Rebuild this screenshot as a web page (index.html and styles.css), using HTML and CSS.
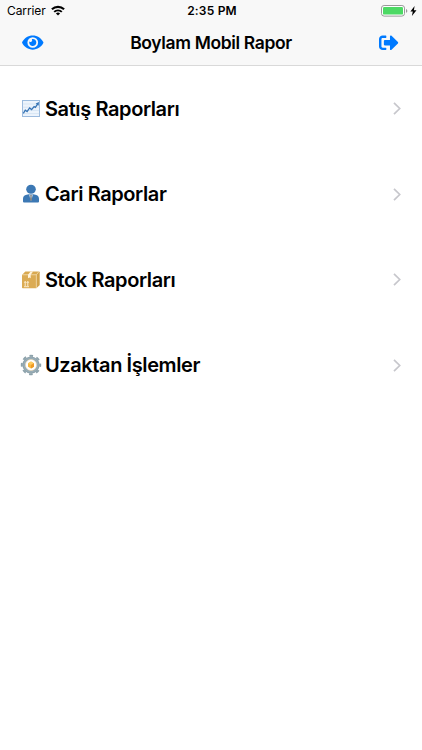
FILE: index.html
```
<!DOCTYPE html>
<html lang="tr">
<head>
    <meta charset="UTF-8">
    <meta name="viewport" content="width=device-width, initial-scale=1.0">
    <title>Boylam Mobil Rapor</title>
    <link rel="stylesheet" href="styles.css">
</head>
<body>

    <header class="header">
        <!-- Durum çubuğu -->
        <div class="status-bar">
            <div class="carrier">
                <span>Carrier</span>
                <svg class="wifi" viewBox="0 0 14 11" fill="none" stroke="#000">
                    <path d="M0.9 4.3a8.8 8.8 0 0 1 12.2 0" stroke-width="2.1"/>
                    <path d="M3.2 6.9a5.5 5.5 0 0 1 7.6 0" stroke-width="2"/>
                    <path d="M7 10.6L4.9 8.6a3 3 0 0 1 4.2 0z" fill="#000" stroke="none"/>
                </svg>
            </div>
            <span class="time">2:35 PM</span>
            <div class="power">
                <svg class="battery" viewBox="0 0 27 12">
                    <rect x="0.5" y="0.5" width="23" height="10.6" rx="2.6" fill="#fff" stroke="#999"/>
                    <rect x="2" y="2" width="20" height="7.6" rx="1.2" fill="#4cd964"/>
                    <path d="M25 4v3.8c.8-.3 1.3-1 1.3-1.9S25.8 4.3 25 4z" fill="#999"/>
                </svg>
                <svg class="bolt" viewBox="0 0 7 10"><path d="M4.6 0L.4 5.600h2.400L1.900 10 6.500 4.200H3.900z"/></svg>
            </div>
        </div>

        <!-- Üst menü -->
        <nav class="nav-bar">
            <button class="nav-button" aria-label="Göster">
                <svg class="eye" viewBox="0 0 576 512"><path d="M572.52 241.4C518.29 135.59 410.93 64 288 64S57.68 135.64 3.48 241.41a32.35 32.35 0 0 0 0 29.19C57.71 376.41 165.07 448 288 448s230.32-71.64 284.52-177.41a32.35 32.35 0 0 0 0-29.19zM288 400a144 144 0 1 1 144-144 143.93 143.93 0 0 1-144 144zm0-240a95.31 95.31 0 0 0-25.31 3.79 47.85 47.85 0 0 1-66.9 66.9A95.78 95.78 0 1 0 288 160z"/></svg>
            </button>
            <h1>Boylam Mobil Rapor</h1>
            <button class="nav-button" aria-label="Çıkış">
                <svg class="exit" viewBox="0 0 512 512"><path d="M497 273L329 441c-15 15-41 4.500-41-17v-96H152c-13.300 0-24-10.700-24-24v-96c0-13.300 10.700-24 24-24h136V88c0-21.400 25.900-32 41-17l168 168c9.300 9.400 9.300 24.600 0 34zM192 436v-40c0-6.600-5.400-12-12-12H96c-17.700 0-32-14.300-32-32V160c0-17.700 14.300-32 32-32h84c6.600 0 12-5.400 12-12V76c0-6.600-5.400-12-12-12H96c-53 0-96 43-96 96v192c0 53 43 96 96 96h84c6.600 0 12-5.400 12-12z"/></svg>
            </button>
        </nav>
    </header>

    <!-- Rapor listesi -->
    <main class="menu">
        <div class="menu-item">
            <svg class="icon" viewBox="0 0 20 20">
                <rect x="1.400" y="1.600" width="17.200" height="15.800" fill="#edf4fc" stroke="#86acd6" stroke-width="0.800"/>
                <path d="M1.800 5h16.400M1.800 8.200h16.400M1.800 11.400h16.400M1.800 14.600h16.400" stroke="#cfdff0" stroke-width="0.700"/>
                <path d="M2.300 14.400l2-3.200 1.800 1.300 2.500-3.600 2 1.700 2.500-3 1.200.7 2.500-3.500" fill="none" stroke="#3674b5" stroke-width="1.300"/>
                <path d="M18 3l-.4 3.800-2.900-2.200z" fill="#3674b5"/>
            </svg>
            <span class="label">Satış Raporları</span>
            <svg class="arrow" viewBox="0 0 8 13"><path d="M1 .8l5.700 5.700L1 12.200"/></svg>
        </div>
        <div class="menu-item">
            <svg class="icon" viewBox="0 0 20 20">
                <path d="M2 17.500v-2.800c0-2.200 1.400-3.500 3.500-3.900l2.300-.5h4.400l2.300.5c2.100.4 3.500 1.700 3.500 3.900v2.800q0 1-1 1H3q-1 0-1-1z" fill="#3c78b4"/>
                <ellipse cx="10" cy="5.200" rx="4.800" ry="4.500" fill="#3c78b4"/>
                <path d="M7.900 10.600L10 17.300l2.100-6.700z" fill="#c4d2df"/>
                <path d="M9.200 11h1.600l-.3 1.500.6 3-1.100 1.700-1.100-1.700.6-3z" fill="#858585"/>
            </svg>
            <span class="label">Cari Raporlar</span>
            <svg class="arrow" viewBox="0 0 8 13"><path d="M1 .8l5.700 5.700L1 12.200"/></svg>
        </div>
        <div class="menu-item">
            <svg class="icon" viewBox="0 0 20 20">
                <path d="M1.200 4.800L4.300 1.500h13.500L15.300 4.800z" fill="#d9a950"/>
                <path d="M15.300 4.800l2.500-3.300q.9 0 .9.800v12.400q0 .5-.4.900l-3 2.700z" fill="#d2a24a"/>
                <path d="M1 4.800h14.300v13.500H1.800q-.8 0-.8-.8z" fill="#dbab54"/>
                <path d="M1.200 4.800h14.100l2.600-3M15.300 4.800v13.300" fill="none" stroke="#f3dba9" stroke-width="0.700"/>
                <path d="M7 4.800l2.600-3.200h2.500L9.700 4.800v3.500l-1.300-.8-1.400.8z" fill="#fff4df"/>
                <path d="M4.200 16v-4.500M6.800 16v-4.500M3 16.700h5M3.300 12.700l.9-1.200.9 1.200M5.900 12.700l.9-1.200.9 1.200" fill="none" stroke="#fff4db" stroke-width="0.900"/>
            </svg>
            <span class="label">Stok Raporları</span>
            <svg class="arrow" viewBox="0 0 8 13"><path d="M1 .8l5.700 5.700L1 12.200"/></svg>
        </div>
        <div class="menu-item">
            <svg class="icon" viewBox="0 0 20 20">
                <circle cx="10" cy="10" r="9.200" fill="none" stroke="#8da2ab" stroke-width="2" stroke-dasharray="3.613 3.613" stroke-dashoffset="1.806"/>
                <circle cx="10" cy="10" r="7.200" fill="#fff" stroke="#8da2ab" stroke-width="2.800"/>
                <circle cx="10" cy="10" r="7" fill="none" stroke="#9eb2bc" stroke-width="1"/>
                <circle cx="10" cy="10" r="5.600" fill="none" stroke="#dcc79f" stroke-width="0.500"/>
                <path d="M10 6.600l3 1.700v3.500l-3 1.700-3-1.700V8.300z" fill="#f8b83f"/>
                <path d="M10 6.600l3 1.700-3 1.700-3-1.700z" fill="#ffcb60"/>
                <path d="M10 10l3-1.700v3.500l-3 1.700z" fill="#f09a25"/>
            </svg>
            <span class="label">Uzaktan İşlemler</span>
            <svg class="arrow" viewBox="0 0 8 13"><path d="M1 .8l5.700 5.700L1 12.200"/></svg>
        </div>
    </main>

</body>
</html>
```
FILE: styles.css
```
* {
    box-sizing: border-box;
}

body {
    margin: 0;
    font-family: Inter, "Liberation Sans", sans-serif;
    background-color: #fff;
    color: #000;
}

svg {
    display: block;
    flex-shrink: 0;
    overflow: visible;
}

.header {
    height: 66px;
    background-color: #f8f8f8;
    border-bottom: 1px solid #d9d9d9;
}

.status-bar {
    display: grid;
    grid-template-columns: 1fr auto 1fr;
    align-items: center;
    height: 21px;
    padding: 0 5px 0 7px;
    font-size: 12px;
}

.carrier {
    display: flex;
    align-items: center;
    gap: 5px;
    letter-spacing: -0.1px;
}

.wifi {
    width: 14px;
    height: 11px;
}

.time {
    font-weight: 600;
    letter-spacing: 0.2px;
}

.power {
    display: flex;
    align-items: center;
    justify-content: flex-end;
    gap: 2px;
}

.battery {
    width: 27px;
    height: 12px;
}

.bolt {
    width: 7px;
    height: 10px;
}

.nav-bar {
    display: flex;
    align-items: center;
    justify-content: space-between;
    height: 43px;
    padding: 0 24px 0 22px;
}

.nav-bar h1 {
    margin: 0;
    font-size: 17.5px;
    font-weight: 600;
    letter-spacing: -0.36px;
    white-space: nowrap;
}

.nav-button {
    padding: 0;
    border: none;
    background-color: transparent;
    fill: #007aff;
    cursor: pointer;
}

.eye {
    width: 21.5px;
    height: 19px;
}

.exit {
    width: 19.5px;
    height: 19.5px;
}

.menu-item {
    display: flex;
    align-items: center;
    height: 85.5px;
    padding: 0 21px;
}

.icon {
    width: 20px;
    height: 20px;
    margin-right: 4px;
}

.label {
    flex: 1;
    font-size: 20px;
    font-weight: 600;
    letter-spacing: -0.4px;
    white-space: nowrap;
}

.arrow {
    width: 8px;
    height: 13px;
    fill: none;
    stroke: #c7c7cc;
    stroke-width: 1.7;
}
```
